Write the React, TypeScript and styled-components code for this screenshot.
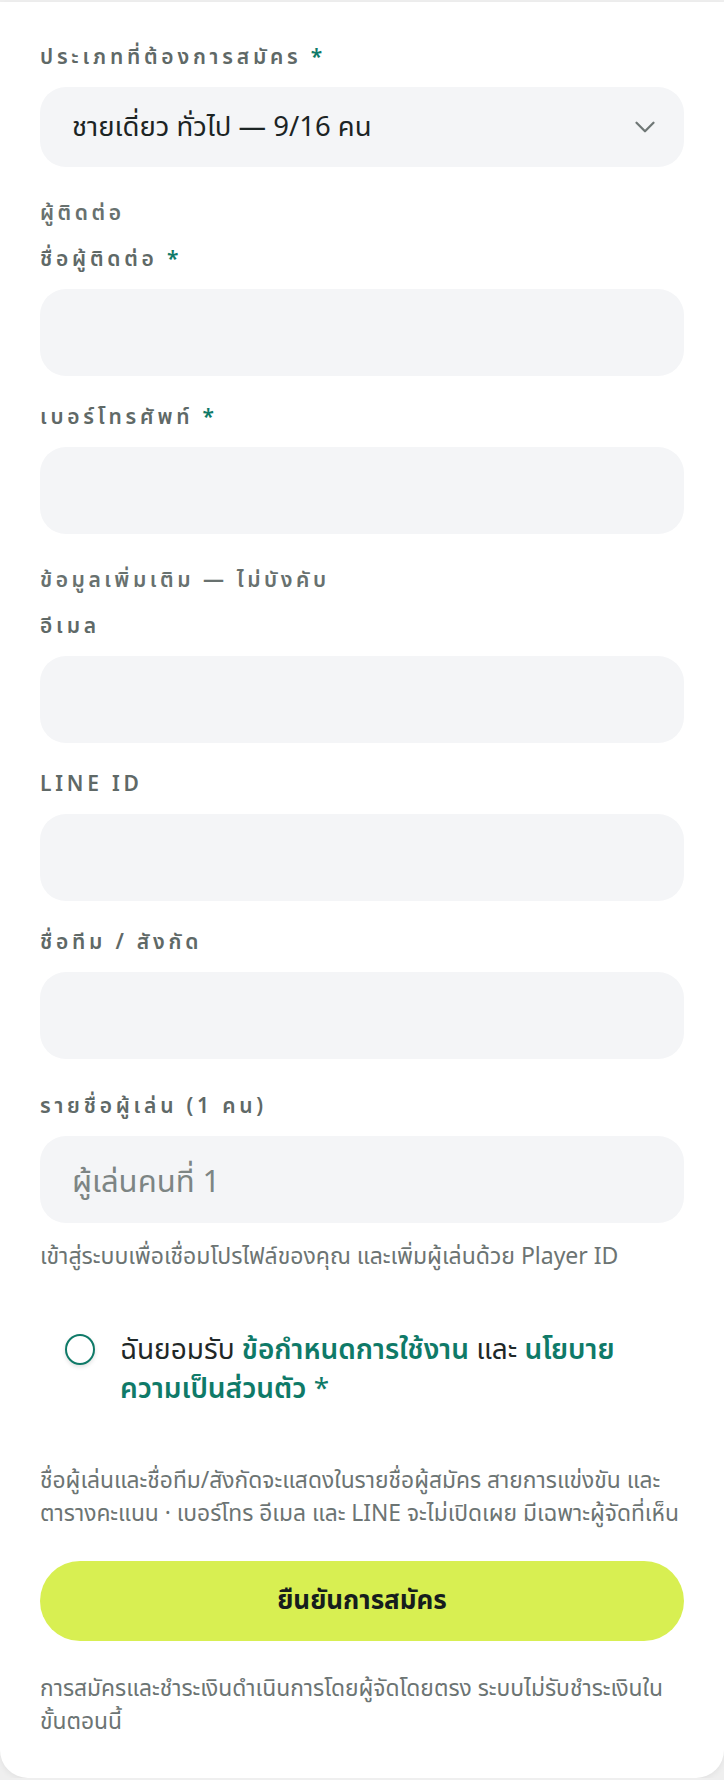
import * as React from 'react';
import styled, { createGlobalStyle } from 'styled-components';

const GlobalStyle = createGlobalStyle`
  html, body {
    margin: 0;
    padding: 0;
    background: #efefef;
  }
  body {
    font-family: "Noto Sans", "Noto Sans Thai", Inter, sans-serif;
    -webkit-font-smoothing: antialiased;
  }
  * {
    box-sizing: border-box;
  }
`;

function App() {
  return (
    <>
      <GlobalStyle />
      <Sheet>
        <Field>
          <Label>
            ประเภทที่ต้องการสมัคร <Req>*</Req>
          </Label>
          <Select>
            <span>ชายเดี่ยว ทั่วไป — 9/16 คน</span>
            <Chevron viewBox="0 0 24 24">
              <path d="M6 9l6 6 6-6" />
            </Chevron>
          </Select>
        </Field>

        <Group>
          <GroupTitle>ผู้ติดต่อ</GroupTitle>
          <Field>
            <Label>
              ชื่อผู้ติดต่อ <Req>*</Req>
            </Label>
            <Input />
          </Field>
          <Field>
            <Label>
              เบอร์โทรศัพท์ <Req>*</Req>
            </Label>
            <Input />
          </Field>
        </Group>

        <Group>
          <GroupTitle>ข้อมูลเพิ่มเติม — ไม่บังคับ</GroupTitle>
          <Field>
            <Label>อีเมล</Label>
            <Input />
          </Field>
          <Field>
            <Label>LINE ID</Label>
            <Input />
          </Field>
          <Field>
            <Label>ชื่อทีม / สังกัด</Label>
            <Input />
          </Field>
        </Group>

        <Players>
          <Field>
            <Label>รายชื่อผู้เล่น (1 คน)</Label>
            <Input placeholder="ผู้เล่นคนที่ 1" />
          </Field>
          <Hint>เข้าสู่ระบบเพื่อเชื่อมโปรไฟล์ของคุณ และเพิ่มผู้เล่นด้วย Player ID</Hint>
        </Players>

        <Consent>
          <Check />
          <ConsentText>
            ฉันยอมรับ <Link>ข้อกำหนดการใช้งาน</Link> และ{' '}
            <Link>
              นโยบาย<NoWrap>ความเป็นส่วนตัว</NoWrap>
            </Link>{' '}
            <Req>*</Req>
          </ConsentText>
        </Consent>

        <Note>
          ชื่อผู้เล่นและชื่อทีม/สังกัดจะแสดงในรายชื่อผู้สมัคร สายการแข่งขัน และตารางคะแนน · เบอร์โทร อีเมล และ LINE จะไม่เปิดเผย มีเฉพาะผู้จัดที่เห็น
        </Note>

        <Submit>ยืนยันการสมัคร</Submit>

        <Note>การสมัครและชำระเงินดำเนินการโดยผู้จัดโดยตรง ระบบไม่รับชำระเงินในขั้นตอนนี้</Note>
      </Sheet>
    </>
  );
}

const Sheet = styled.main`
  margin-top: 2px;
  min-height: 1776px;
  background: #ffffff;
  border-radius: 0 0 28px 28px;
  box-shadow: 0 2px 6px rgba(0, 0, 0, 0.06);
  padding: 40px 40px 40px;
  display: flex;
  flex-direction: column;
`;

const Field = styled.div`
  display: flex;
  flex-direction: column;
  gap: 17px;
`;

const Group = styled.section`
  display: flex;
  flex-direction: column;
  gap: 26px;
  margin-top: 31px;

  & > h3 + div {
    margin-top: -8px;
  }
`;

const GroupTitle = styled.h3`
  margin: 0;
  font-size: 21px;
  line-height: 28px;
  font-weight: 600;
  letter-spacing: 0.17em;
  color: #68716f;
`;

const Label = styled.label`
  font-size: 21px;
  line-height: 28px;
  font-weight: 600;
  letter-spacing: 0.18em;
  color: #5f6967;
`;

const Req = styled.span`
  color: #0f7a68;
  letter-spacing: 0;
`;

const NoWrap = styled.span`
  white-space: nowrap;
`;

const Select = styled.div`
  height: 80px;
  border-radius: 26px;
  background: #f4f5f7;
  padding: 0 22px 0 32px;
  display: flex;
  align-items: center;
  justify-content: space-between;
  font-size: 27.5px;
  color: #1c2424;
`;

const Chevron = styled.svg`
  width: 34px;
  height: 34px;
  fill: none;
  stroke: #6f7776;
  stroke-width: 1.6;
  stroke-linecap: round;
  stroke-linejoin: round;
`;

const Input = styled.input`
  height: 87px;
  width: 100%;
  border: none;
  outline: none;
  border-radius: 26px;
  background: #f4f5f7;
  padding: 0 32px;
  font-family: inherit;
  font-size: 31px;
  color: #1c2424;

  &::placeholder {
    color: #7d8584;
  }
`;

const Players = styled.section`
  display: flex;
  flex-direction: column;
  gap: 18px;
  margin-top: 32px;
`;

const Hint = styled.p`
  margin: 0;
  font-size: 23px;
  line-height: 28px;
  color: #6c7473;
`;

const Consent = styled.label`
  display: flex;
  align-items: flex-start;
  gap: 25px;
  margin-top: 60px;
  padding-left: 25px;
`;

const Check = styled.span`
  flex: none;
  width: 30px;
  height: 31px;
  margin-top: 5px;
  border-radius: 50%;
  border: 2px solid #0f7a68;
  box-shadow: 0 2px 4px rgba(0, 0, 0, 0.12);
  background: #ffffff;
`;

const ConsentText = styled.span`
  font-size: 28px;
  line-height: 39px;
  color: #1f2828;
`;

const Link = styled.a`
  color: #0f7a68;
  font-weight: 600;
  text-decoration: none;
`;

const Note = styled.p`
  margin: 56px 0 0;
  font-size: 22.8px;
  line-height: 33px;
  color: #6c7473;
`;

const Submit = styled.button`
  margin-top: 32px;
  height: 80px;
  border: none;
  border-radius: 40px;
  background: #d8ef52;
  font-family: inherit;
  font-size: 26px;
  font-weight: 700;
  color: #161d1d;

  & + p {
    margin-top: 30px;
  }
`;

export default App;
